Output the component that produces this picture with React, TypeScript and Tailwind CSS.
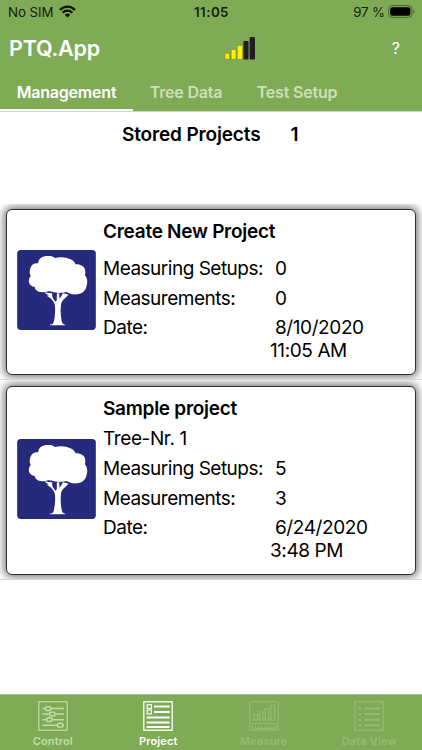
import React from 'react';

interface Project {
  name: string;
  treeNr: string | null;
  setups: number;
  measurements: number;
  date: string;
  time: string;
}

const PROJECTS: Project[] = [
  { name: 'Create New Project', treeNr: null, setups: 0, measurements: 0, date: '8/10/2020', time: '11:05 AM' },
  { name: 'Sample project', treeNr: 'Tree-Nr. 1', setups: 5, measurements: 3, date: '6/24/2020', time: '3:48 PM' },
];

const StatusBar: React.FC = () => (
  <div className="grid h-6 grid-cols-3 items-center pl-2 pr-[7px] pt-px text-[13.3px] text-[#14200b]">
    <div className="flex items-center gap-[5px]">
      <span className="tracking-[-0.05px]">No SIM</span>
      <svg className="mb-[2px] h-[13px] w-[17px]" viewBox="0 0 17 13" fill="none" stroke="#0b1205" strokeWidth="2.2">
        <path d="M1 4.9C5.2 .6 11.8 .6 16 4.9" />
        <path d="M3.6 7.7c2.8-2.7 7-2.7 9.8 0" />
        <path d="M8.5 12.4 5.8 9.7a3.9 3.9 0 0 1 5.4 0z" fill="#0b1205" stroke="none" />
      </svg>
    </div>
    <span className="text-center font-semibold tracking-[0.45px]">11:05</span>
    <div className="flex items-center justify-end gap-[3px]">
      <span className="tracking-[-0.15px]">97 %</span>
      <svg className="mb-[2px] h-[13px] w-[27px]" viewBox="0 0 27 13">
        <rect x=".6" y=".6" width="23.4" height="11.8" rx="3.4" fill="none" stroke="#4a6630" />
        <rect x="2.2" y="2.2" width="20.2" height="8.6" rx="2" fill="#000" />
        <path d="M25.2 4.4c1.8.8 1.8 3.4 0 4.2z" fill="#4a6630" />
      </svg>
    </div>
  </div>
);

const SignalIcon: React.FC = () => (
  <svg className="h-[24px] w-[32px]" viewBox="0 0 32 24">
    <g fill="#fff200" stroke="#6d7a1e" strokeWidth=".5">
      <rect x=".9" y="17.2" width="4.6" height="6.1" rx="1" />
      <rect x="7.2" y="13.6" width="4.8" height="9.7" rx="1" />
      <rect x="13.2" y="9.2" width="5.4" height="14.1" rx="1" />
    </g>
    <g fill="#231f20">
      <rect x="19.4" y="5" width="5.2" height="18.6" rx="1" />
      <rect x="25.6" y=".9" width="5.4" height="22.7" rx="1" />
    </g>
  </svg>
);

const TreeIcon: React.FC = () => (
  <svg className="h-[80px] w-[79px] shrink-0" viewBox="0 0 236 240">
    <rect width="236" height="240" rx="11" fill="#272a7c" />
    <g fill="#fff">
      <path d="M63 40C64 24 76 18 91 18C100 18 108 19 113 24C128 20 147 21 160 28C169 32 173 37 175 43C190 42 203 50 204 61C205 67 205 71 203 76C211 84 212 99 208 108C206 122 195 132 180 133C169 134 156 132 149 126C138 129 119 130 108 126C102 124 98 123 93 124C81 128 64 128 57 120C54 117 53 114 53 111C41 110 34 101 35 91C36 85 38 81 41 78C36 71 37 62 40 53C44 43 52 39 63 40Z" />
      <path transform="translate(-2 0)" d="M84 127C92 129 100 130 107 130L107 137C109 145 113 151 118 155L121 149V130H128L129 146C133 142 136 136 139 130L150 132L156 134C148 143 137 150 134 161C131 180 133 203 137 218C139 222 143 223 147 224V226H100V224C105 223 109 222 111 218C116 200 117 180 115 164C111 149 99 142 91 137L98 136C92 134 87 131 84 127Z" />
    </g>
  </svg>
);

const ProjectCard: React.FC<{ project: Project }> = ({ project }) => (
  <li className="overflow-hidden border-b border-[#d4d4d4] px-[6px] pb-[4px] pt-[5px] last:pt-[6px]">
    <div className="flex items-center rounded-[6px] border-[1.5px] border-[#2e2e2e] bg-white pl-[10px] shadow-[0_0_8px_2px_rgba(0,0,0,0.55)]">
      <div className="-mt-[4px]">
        <TreeIcon />
      </div>
      <div className="pb-[12px] pl-[7px] pt-[8px] text-[19px] leading-[23px]">
        <h2 className="pb-[7px] pt-[2px] font-semibold leading-[23px] tracking-[-0.27px]">{project.name}</h2>
        {project.treeNr ? <p className="pb-[7px] tracking-[-0.4px]">{project.treeNr}</p> : <div className="h-[7px]" />}
        <dl className="grid grid-cols-[167px_1fr] gap-y-[6.5px] whitespace-pre tracking-[-0.5px]">
          <dt>Measuring Setups:</dt>
          <dd className="tracking-[-0.35px]"> {project.setups}</dd>
          <dt>Measurements:</dt>
          <dd className="tracking-[-0.35px]"> {project.measurements}</dd>
          <dt>Date:</dt>
          <dd className="tracking-[-0.4px]">
            {' '}{project.date}{'\n'}{project.time}
          </dd>
        </dl>
      </div>
    </div>
  </li>
);

const ControlIcon: React.FC = () => (
  <svg className="size-[30px]" viewBox="0 0 30 30" fill="none" stroke="currentColor">
    <rect x=".8" y=".8" width="28.4" height="28.4" strokeWidth="1.2" />
    <g strokeWidth="1.5">
      <path d="M4.5 7.6h3M13 7.6h13M4.5 13.1h7.2M17.2 13.1H26M4.5 18.7h4.2M14.2 18.7H26M4.5 24.2h15M25 24.2h1" />
      <rect x="7.5" y="5.7" width="5.2" height="3.8" rx="1.2" />
      <rect x="11.7" y="11.2" width="5.2" height="3.8" rx="1.2" />
      <rect x="8.7" y="16.8" width="5.2" height="3.8" rx="1.2" />
      <rect x="19.6" y="22.3" width="5.2" height="3.8" rx="1.2" />
    </g>
  </svg>
);

const ProjectIcon: React.FC = () => (
  <svg className="size-[30px]" viewBox="0 0 30 30" fill="none" stroke="currentColor">
    <rect x=".8" y=".8" width="28.4" height="28.4" strokeWidth="1.3" />
    <rect x="4.2" y="3.7" width="4.2" height="3.8" strokeWidth="1.2" />
    <rect x="4.2" y="9.1" width="4.2" height="3.8" strokeWidth="1.2" />
    <path d="M11 5.6h15.5M11 11h15.5M3.6 16.6h22.9M3.6 21.4h22.9M3.6 26h22.9" strokeWidth="2" />
  </svg>
);

const MeasureIcon: React.FC = () => (
  <svg className="size-[30px]" viewBox="0 0 30 30" fill="none" stroke="currentColor">
    <rect x=".8" y=".8" width="28.4" height="28.4" strokeWidth="1.2" />
    <path d="M5 19v-5.5h3.5V19M10.5 19v-8H14v8M16.2 19V7.5h3.5V19M22 19V4.5h3.7V19M3.5 19h23" strokeWidth="1.2" />
    <path d="M3.5 27.5v-5h23.5v5zM6.5 27.5v-3M9.5 27.5v-2M12.5 27.5v-3M15.5 27.5v-2M18.5 27.5v-3M21.5 27.5v-2M24.5 27.5v-3" strokeWidth="1" />
  </svg>
);

const DataViewIcon: React.FC = () => (
  <svg className="size-[30px]" viewBox="0 0 30 30" fill="none" stroke="currentColor">
    <rect x=".8" y=".8" width="28.4" height="28.4" strokeWidth="1.2" />
    <path d="M4.5 7.4H7M10.5 7.4h15.5M4.5 13H7M10.5 13h15.5M4.5 18.7H7M10.5 18.7h15.5M4.5 24.2H7M10.5 24.2h15.5" strokeWidth="2" />
  </svg>
);

const NAV_ITEMS = [
  { label: 'Control', icon: ControlIcon, color: 'text-[#c4dca9]' },
  { label: 'Project', icon: ProjectIcon, color: 'text-white' },
  { label: 'Measure', icon: MeasureIcon, color: 'text-[#97bb74]' },
  { label: 'Data View', icon: DataViewIcon, color: 'text-[#97bb74]' },
];

const App: React.FC = () => {
  return (
    <div className="flex h-[750px] w-[422px] flex-col overflow-hidden bg-white font-['Inter','Liberation_Sans',sans-serif] text-black">
      <header className="h-[112px] shrink-0 border-b border-[#c8dab5] bg-[#80ab56]">
        <StatusBar />
        <div className="flex h-[48px] items-center pl-[9px] pr-[22px] text-white">
          <h1 className="w-[215px] text-[21.5px] font-semibold tracking-[-0.2px]">PTQ.App</h1>
          <SignalIcon />
          <button className="ml-auto text-[16px]">?</button>
        </div>
        <nav className="flex h-[39px] text-[16px] font-semibold tracking-[-0.2px] text-[#cde0b8]">
          <button className="h-full w-[133px] border-b-2 border-white pt-[3px] text-white">Management</button>
          <button className="h-full w-[106px] border-b-2 border-transparent pt-[3px]">Tree Data</button>
          <button className="h-full w-[116px] border-b-2 border-transparent pt-[3px]">Test Setup</button>
        </nav>
      </header>

      <main className="flex-1">
        <div className="flex h-[92px] gap-[30px] pl-[122px] pt-[11px] text-[19px] font-semibold leading-6 tracking-[-0.15px]">
          <span>Stored Projects</span>
          <span>1</span>
        </div>
        <ul>
          {PROJECTS.map(project => (
            <ProjectCard key={project.name} project={project} />
          ))}
        </ul>
      </main>

      <footer className="grid h-[56px] shrink-0 grid-cols-4 border-t border-[#a9bd93] bg-[#80ab56]">
        {NAV_ITEMS.map(({ label, icon: Icon, color }) => (
          <button key={label} className={`flex flex-col items-center pt-[6px] text-[11px] font-semibold tracking-[0.15px] ${color}`}>
            <Icon />
            <span className="mt-[2px] leading-[16px]">{label}</span>
          </button>
        ))}
      </footer>
    </div>
  );
};

export default App;
